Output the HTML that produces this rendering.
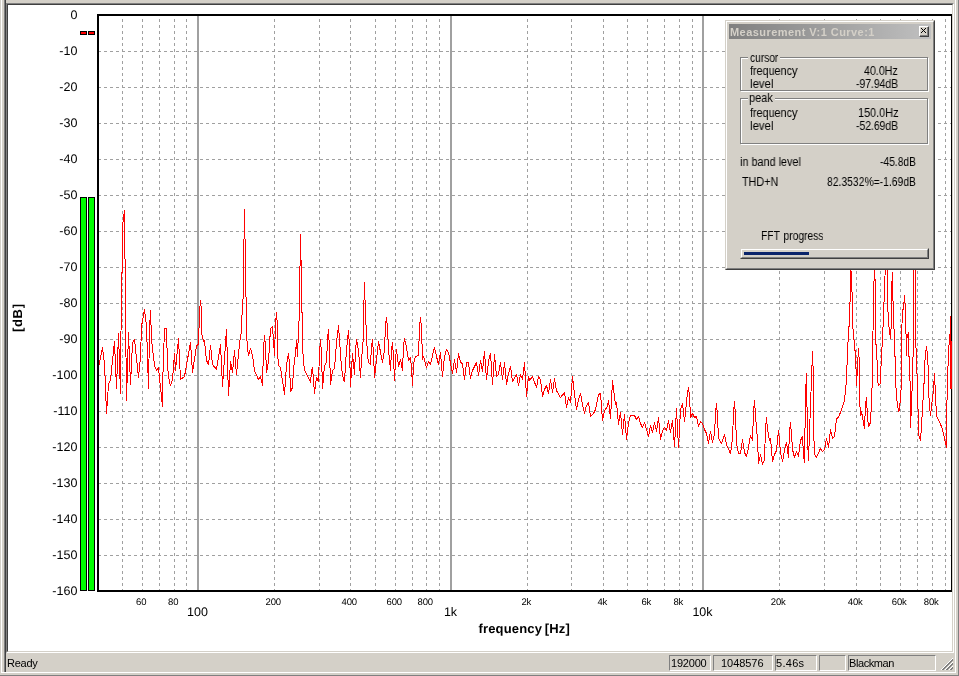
<!DOCTYPE html>
<html lang="en"><head><meta charset="utf-8"><title>Measurement</title>
<style>
html,body{margin:0;padding:0}
body{width:959px;height:676px;background:#d4d0c8;position:relative;overflow:hidden;font-family:"Liberation Sans",Arial,sans-serif;font-size:11px;color:#000}
.abs{position:absolute}
.ln{position:absolute}
#view{position:absolute;left:6px;top:3px;width:946px;height:648px;border-style:solid;border-width:1px;border-color:#808080 #fff #fff #808080}
#view>div{position:absolute;left:0;top:0;width:944px;height:646px;border-style:solid;border-width:1px;border-color:#404040 #d4d0c8 #d4d0c8 #404040;background:#fff}
.pane{position:absolute;top:655px;height:14px;border-style:solid;border-width:1px;border-color:#808080 #fff #fff #808080;line-height:14px;white-space:nowrap;font-size:11px}
.pane span{position:absolute;top:0;left:2px}
#ready{position:absolute;left:7px;top:656px;line-height:14px;font-size:11px;letter-spacing:-.25px}
#dlg{position:absolute;left:725px;top:20px;width:208px;height:248px;border-style:solid;border-width:1px;border-color:#d4d0c8 #404040 #404040 #d4d0c8;background:#d4d0c8}
#dlg>.in{position:absolute;left:0;top:0;width:206px;height:246px;border-style:solid;border-width:1px;border-color:#fff #808080 #808080 #fff}
#title{position:absolute;left:729px;top:24px;width:202px;height:15px;background:linear-gradient(to right,#808080,#c0c0c0);color:#d4d0c8;font-weight:bold;font-size:11px;line-height:15px;white-space:nowrap}
#title span{position:absolute;left:1px;top:1px;letter-spacing:.45px}
#close{position:absolute;left:919px;top:26px;width:8px;height:9px;background:#d4d0c8;border-style:solid;border-width:1px;border-color:#fff #404040 #404040 #fff}
#close i{position:absolute;left:0;top:0;width:7px;height:8px;border-style:solid;border-width:0 1px 1px 0;border-color:#808080}
.grp{position:absolute;border:1px solid #808080;box-shadow:1px 1px 0 #fff, inset 1px 1px 0 #fff}
.t{position:absolute;white-space:nowrap;font-size:12px;line-height:14px;transform-origin:0 0}
.t,.pane span,#ready,#title span{will-change:transform}
#prog{position:absolute;left:740px;top:248px;width:187px;height:9px;border-style:solid;border-width:1px;border-color:#d4d0c8 #404040 #404040 #d4d0c8}
#prog>div{position:absolute;left:0;top:0;width:185px;height:7px;border-style:solid;border-width:1px;border-color:#fff #808080 #808080 #fff}
#bar{position:absolute;left:744px;top:252px;width:65px;height:3px;background:#0a246a}
</style></head>
<body>
<div class="ln" style="left:1px;top:0;width:1px;height:673px;background:#fff"></div>
<div class="ln" style="left:4px;top:0;width:1px;height:672px;background:#808080"></div>
<div class="ln" style="left:5px;top:0;width:1px;height:672px;background:#404040"></div>
<div class="ln" style="left:955px;top:0;width:1px;height:673px;background:#fff"></div>
<div class="ln" style="left:958px;top:0;width:1px;height:676px;background:#808080"></div>
<div class="ln" style="left:1px;top:672px;width:955px;height:1px;background:#fff"></div>
<div class="ln" style="left:0;top:675px;width:959px;height:1px;background:#808080"></div>
<div id="view"><div></div></div>
<svg class="abs" id="plot" style="left:0;top:0;will-change:transform" width="959" height="676" viewBox="0 0 959 676" shape-rendering="crispEdges">
<path d="M122.5 16V590M142.5 16V590M159.5 16V590M174.5 16V590M186.5 16V590M274.5 16V590M319.5 16V590M350.5 16V590M375.5 16V590M395.5 16V590M412.5 16V590M426.5 16V590M439.5 16V590M527.5 16V590M571.5 16V590M603.5 16V590M627.5 16V590M647.5 16V590M664.5 16V590M679.5 16V590M692.5 16V590M779.5 16V590M824.5 16V590M856.5 16V590M880.5 16V590M900.5 16V590M917.5 16V590M932.5 16V590M945.5 16V590" fill="none" stroke="#a0a0a0" stroke-width="1" stroke-dasharray="3 3" stroke-dashoffset="3"/>
<path d="M99 51.5H951M99 87.5H951M99 123.5H951M99 159.5H951M99 195.5H951M99 231.5H951M99 267.5H951M99 303.5H951M99 339.5H951M99 375.5H951M99 411.5H951M99 447.5H951M99 483.5H951M99 519.5H951M99 555.5H951" fill="none" stroke="#a0a0a0" stroke-width="1" stroke-dasharray="3 3" stroke-dashoffset="1"/>
<rect x="197" y="16" width="2" height="574" fill="#a0a0a0"/>
<rect x="450" y="16" width="2" height="574" fill="#a0a0a0"/>
<rect x="702" y="16" width="2" height="574" fill="#a0a0a0"/>
<path fill="none" stroke="#ff0000" stroke-width="1" stroke-linecap="square" d="M98.5 367.5L102.5 347.5M102.5 347.5L104.5 363.5M104.5 363.5L106.5 413.5M106.5 413.5L108.5 384.5M108.5 384.5L110.5 379.5M110.5 379.5L114.5 341.5M114.5 341.5L116.5 388.5M116.5 388.5L118.5 333.5M118.5 333.5L120.5 393.5M120.5 393.5L121.5 272.5M121.5 272.5H122.5M122.5 272.5V226.5M122.5 226.5L123.5 217.5M123.5 217.5L124.5 210.5M124.5 210.5V258.5M124.5 258.5L125.5 259.5M125.5 259.5V312.5M125.5 312.5L126.5 400.5M126.5 400.5L128.5 332.5M128.5 332.5L130.5 384.5M130.5 384.5L132.5 342.5M132.5 342.5L134.5 339.5M134.5 339.5L138.5 377.5M138.5 377.5L140.5 357.5M140.5 357.5L141.5 326.5M141.5 326.5L144.5 309.5M144.5 309.5L146.5 326.5M146.5 326.5L148.5 388.5M148.5 388.5L149.5 330.5M149.5 330.5L150.5 310.5M150.5 310.5L151.5 339.5M151.5 339.5L154.5 365.5M154.5 365.5L156.5 370.5M156.5 370.5L158.5 367.5M158.5 367.5L160.5 387.5M160.5 387.5L162.5 406.5M162.5 406.5V387.5M162.5 387.5L164.5 328.5M164.5 328.5H166.5M166.5 328.5L167.5 366.5M167.5 366.5L169.5 382.5M169.5 382.5L170.5 385.5M170.5 385.5L172.5 379.5M172.5 379.5L174.5 353.5M174.5 353.5L175.5 370.5M175.5 370.5L178.5 338.5M178.5 338.5L180.5 379.5M180.5 379.5L184.5 376.5M184.5 376.5L190.5 342.5M190.5 342.5L192.5 372.5M192.5 372.5L196.5 345.5M196.5 345.5L198.5 344.5M198.5 344.5L199.5 312.5M199.5 312.5L200.5 300.5M200.5 300.5L201.5 311.5M201.5 311.5V332.5M201.5 332.5L203.5 341.5M203.5 341.5L204.5 340.5M204.5 340.5L206.5 360.5M206.5 360.5L208.5 364.5M208.5 364.5L210.5 345.5M210.5 345.5L212.5 364.5M212.5 364.5L216.5 369.5M216.5 369.5L220.5 344.5M220.5 344.5L222.5 386.5M222.5 386.5L226.5 329.5M226.5 329.5L228.5 395.5M228.5 395.5L230.5 361.5M230.5 361.5L232.5 372.5M232.5 372.5L234.5 350.5M234.5 350.5L236.5 374.5M236.5 374.5L237.5 364.5M237.5 364.5L239.5 343.5M239.5 343.5L241.5 331.5M241.5 331.5L242.5 299.5M242.5 299.5L243.5 298.5M243.5 298.5V239.5M243.5 239.5L244.5 238.5M244.5 238.5V209.5M244.5 209.5V238.5M244.5 238.5L245.5 239.5M245.5 239.5V296.5M245.5 296.5L246.5 297.5M246.5 297.5V333.5M246.5 333.5L247.5 348.5M247.5 348.5L248.5 355.5M248.5 355.5L250.5 348.5M250.5 348.5L252.5 355.5M252.5 355.5L254.5 370.5M254.5 370.5L258.5 379.5M258.5 379.5L260.5 376.5M260.5 376.5L262.5 385.5M262.5 385.5L263.5 348.5M263.5 348.5L264.5 335.5M264.5 335.5L265.5 346.5M265.5 346.5L266.5 372.5M266.5 372.5L268.5 361.5M268.5 361.5L270.5 328.5M270.5 328.5L272.5 326.5M272.5 326.5L274.5 355.5M274.5 355.5L275.5 324.5M275.5 324.5L276.5 312.5M276.5 312.5L277.5 327.5M277.5 327.5V352.5M277.5 352.5L278.5 365.5M278.5 365.5L280.5 367.5M280.5 367.5L284.5 394.5M284.5 394.5L286.5 364.5M286.5 364.5L288.5 353.5M288.5 353.5L289.5 364.5M289.5 364.5L290.5 391.5M290.5 391.5L292.5 387.5M292.5 387.5L293.5 368.5M293.5 368.5L295.5 353.5M295.5 353.5L296.5 340.5M296.5 340.5L297.5 356.5M297.5 356.5L298.5 330.5M298.5 330.5L299.5 312.5M299.5 312.5V266.5M299.5 266.5L300.5 265.5M300.5 265.5V234.5M300.5 234.5V260.5M300.5 260.5H301.5M301.5 260.5V312.5M301.5 312.5H302.5M302.5 312.5V345.5M302.5 345.5L303.5 361.5M303.5 361.5L304.5 370.5M304.5 370.5L307.5 375.5M307.5 375.5L310.5 382.5M310.5 382.5L311.5 371.5M311.5 371.5L312.5 367.5M312.5 367.5L314.5 393.5M314.5 393.5L316.5 377.5M316.5 377.5L318.5 381.5M318.5 381.5L319.5 352.5M319.5 352.5L320.5 339.5M320.5 339.5L321.5 353.5M321.5 353.5L322.5 388.5M322.5 388.5L324.5 365.5M324.5 365.5L326.5 362.5M326.5 362.5L327.5 339.5M327.5 339.5L328.5 329.5M328.5 329.5L329.5 349.5M329.5 349.5L330.5 384.5M330.5 384.5L332.5 370.5M332.5 370.5L334.5 368.5M334.5 368.5L336.5 342.5M336.5 342.5L338.5 325.5M338.5 325.5L339.5 339.5M339.5 339.5L341.5 368.5M341.5 368.5L343.5 379.5M343.5 379.5L344.5 381.5M344.5 381.5L346.5 349.5M346.5 349.5L348.5 330.5M348.5 330.5L349.5 347.5M349.5 347.5L350.5 386.5M350.5 386.5L352.5 353.5M352.5 353.5L354.5 374.5M354.5 374.5L355.5 350.5M355.5 350.5L356.5 339.5M356.5 339.5L358.5 350.5M358.5 350.5L360.5 377.5M360.5 377.5L361.5 359.5M361.5 359.5L363.5 336.5M363.5 336.5V300.5M363.5 300.5L364.5 299.5M364.5 299.5V282.5M364.5 282.5V299.5M364.5 299.5L365.5 300.5M365.5 300.5V312.5M365.5 312.5L366.5 336.5M366.5 336.5L367.5 355.5M367.5 355.5L368.5 362.5M368.5 362.5L370.5 364.5M370.5 364.5L371.5 346.5M371.5 346.5L372.5 339.5M372.5 339.5L373.5 353.5M373.5 353.5L374.5 377.5M374.5 377.5L376.5 359.5M376.5 359.5L378.5 341.5M378.5 341.5L382.5 362.5M382.5 362.5L384.5 349.5M384.5 349.5L385.5 325.5M385.5 325.5L386.5 317.5M386.5 317.5L387.5 327.5M387.5 327.5L388.5 349.5M388.5 349.5L390.5 370.5M390.5 370.5L391.5 350.5M391.5 350.5L392.5 342.5M392.5 342.5L393.5 356.5M393.5 356.5L394.5 380.5M394.5 380.5L395.5 359.5M395.5 359.5L396.5 349.5M396.5 349.5L398.5 366.5M398.5 366.5L400.5 359.5M400.5 359.5L402.5 370.5M402.5 370.5L403.5 346.5M403.5 346.5L404.5 338.5M404.5 338.5L406.5 347.5M406.5 347.5L408.5 360.5M408.5 360.5L410.5 357.5M410.5 357.5L411.5 367.5M411.5 367.5L412.5 385.5M412.5 385.5L413.5 364.5M413.5 364.5L415.5 356.5M415.5 356.5L418.5 355.5M418.5 355.5L419.5 327.5M419.5 327.5L420.5 317.5M420.5 317.5L421.5 328.5M421.5 328.5L422.5 359.5M422.5 359.5L423.5 356.5M423.5 356.5L426.5 367.5M426.5 367.5L428.5 361.5M428.5 361.5L430.5 364.5M430.5 364.5L432.5 355.5M432.5 355.5L434.5 347.5M434.5 347.5L436.5 356.5M436.5 356.5L438.5 364.5M438.5 364.5L440.5 352.5M440.5 352.5L442.5 376.5M442.5 376.5L444.5 356.5M444.5 356.5L446.5 349.5M446.5 349.5L448.5 352.5M448.5 352.5L452.5 373.5M452.5 373.5L454.5 359.5M454.5 359.5L456.5 372.5M456.5 372.5L458.5 353.5M458.5 353.5L460.5 362.5M460.5 362.5L462.5 363.5M462.5 363.5L464.5 379.5M464.5 379.5L466.5 362.5M466.5 362.5H468.5M468.5 362.5L470.5 378.5M470.5 378.5L472.5 370.5M472.5 370.5L476.5 362.5M476.5 362.5L478.5 375.5M478.5 375.5L480.5 360.5M480.5 360.5L482.5 371.5M482.5 371.5L484.5 351.5M484.5 351.5L486.5 379.5M486.5 379.5L488.5 361.5M488.5 361.5L490.5 353.5M490.5 353.5L492.5 384.5M492.5 384.5L494.5 354.5M494.5 354.5L496.5 376.5M496.5 376.5L498.5 374.5M498.5 374.5L500.5 362.5M500.5 362.5L502.5 379.5M502.5 379.5L504.5 362.5M504.5 362.5L506.5 384.5M506.5 384.5L508.5 373.5M508.5 373.5L510.5 366.5M510.5 366.5L512.5 381.5M512.5 381.5L516.5 374.5M516.5 374.5L518.5 385.5M518.5 385.5L520.5 374.5M520.5 374.5L522.5 379.5M522.5 379.5L524.5 362.5M524.5 362.5L526.5 396.5M526.5 396.5L528.5 376.5M528.5 376.5L529.5 380.5M529.5 380.5L532.5 376.5M532.5 376.5L536.5 387.5M536.5 387.5L538.5 376.5M538.5 376.5L540.5 379.5M540.5 379.5L542.5 396.5M542.5 396.5L544.5 389.5M544.5 389.5L546.5 385.5M546.5 385.5L548.5 393.5M548.5 393.5L550.5 379.5M550.5 379.5L552.5 392.5M552.5 392.5L554.5 378.5M554.5 378.5L556.5 390.5M556.5 390.5L560.5 397.5M560.5 397.5L564.5 392.5M564.5 392.5L566.5 407.5M566.5 407.5L568.5 397.5M568.5 397.5L570.5 402.5M570.5 402.5L572.5 376.5M572.5 376.5L573.5 385.5M573.5 385.5L576.5 409.5M576.5 409.5L578.5 399.5M578.5 399.5L580.5 393.5M580.5 393.5L582.5 404.5M582.5 404.5L584.5 413.5M584.5 413.5L586.5 405.5M586.5 405.5L588.5 402.5M588.5 402.5L590.5 416.5M590.5 416.5L593.5 413.5M593.5 413.5L595.5 409.5M595.5 409.5L598.5 394.5M598.5 394.5L600.5 393.5M600.5 393.5L602.5 420.5M602.5 420.5L604.5 410.5M604.5 410.5L607.5 406.5M607.5 406.5L608.5 400.5M608.5 400.5L610.5 418.5M610.5 418.5L612.5 380.5M612.5 380.5L613.5 389.5M613.5 389.5L615.5 404.5M615.5 404.5L616.5 402.5M616.5 402.5L618.5 424.5M618.5 424.5L620.5 412.5M620.5 412.5L622.5 434.5M622.5 434.5L624.5 414.5M624.5 414.5L626.5 439.5M626.5 439.5L628.5 422.5M628.5 422.5L630.5 415.5M630.5 415.5H634.5M634.5 415.5L636.5 419.5M636.5 419.5L638.5 416.5M638.5 416.5L640.5 423.5M640.5 423.5L642.5 427.5M642.5 427.5L644.5 422.5M644.5 422.5L648.5 436.5M648.5 436.5L650.5 425.5M650.5 425.5L652.5 432.5M652.5 432.5L654.5 422.5M654.5 422.5L656.5 431.5M656.5 431.5L658.5 417.5M658.5 417.5L660.5 439.5M660.5 439.5L662.5 430.5M662.5 430.5L664.5 427.5M664.5 427.5L666.5 430.5M666.5 430.5L668.5 420.5M668.5 420.5L670.5 432.5M670.5 432.5L672.5 420.5M672.5 420.5L674.5 446.5M674.5 446.5L676.5 408.5M676.5 408.5L678.5 447.5M678.5 447.5L680.5 409.5M680.5 409.5L682.5 403.5M682.5 403.5L684.5 421.5M684.5 421.5L686.5 402.5M686.5 402.5L687.5 392.5M687.5 392.5L688.5 387.5M688.5 387.5L689.5 395.5M689.5 395.5L690.5 417.5M690.5 417.5L692.5 413.5M692.5 413.5L694.5 417.5M694.5 417.5L696.5 416.5M696.5 416.5L698.5 426.5M698.5 426.5L700.5 421.5M700.5 421.5L702.5 423.5M702.5 423.5L704.5 429.5M704.5 429.5L706.5 433.5M706.5 433.5L708.5 443.5M708.5 443.5L710.5 431.5M710.5 431.5L712.5 442.5M712.5 442.5L714.5 434.5M714.5 434.5L715.5 413.5M715.5 413.5L716.5 403.5M716.5 403.5L717.5 416.5M717.5 416.5L718.5 438.5M718.5 438.5L721.5 443.5M721.5 443.5L724.5 434.5M724.5 434.5L726.5 444.5M726.5 444.5L730.5 453.5M730.5 453.5L732.5 438.5M732.5 438.5L733.5 413.5M733.5 413.5L734.5 401.5M734.5 401.5L735.5 415.5M735.5 415.5L736.5 443.5M736.5 443.5L738.5 453.5M738.5 453.5H740.5M740.5 453.5L742.5 439.5M742.5 439.5L744.5 452.5M744.5 452.5L746.5 456.5M746.5 456.5L748.5 447.5M748.5 447.5L750.5 435.5M750.5 435.5L752.5 440.5M752.5 440.5L753.5 412.5M753.5 412.5L754.5 400.5M754.5 400.5L755.5 415.5M755.5 415.5L757.5 440.5M757.5 440.5L758.5 463.5M758.5 463.5L760.5 454.5M760.5 454.5L762.5 464.5M762.5 464.5L764.5 459.5M764.5 459.5L765.5 428.5M765.5 428.5L766.5 417.5M766.5 417.5L767.5 429.5M767.5 429.5L769.5 440.5M769.5 440.5L770.5 438.5M770.5 438.5L772.5 461.5M772.5 461.5L774.5 454.5M774.5 454.5L776.5 450.5M776.5 450.5L778.5 430.5M778.5 430.5L780.5 452.5M780.5 452.5L782.5 461.5M782.5 461.5L784.5 450.5M784.5 450.5L786.5 442.5M786.5 442.5L788.5 457.5M788.5 457.5L789.5 431.5M789.5 431.5L790.5 422.5M790.5 422.5L791.5 434.5M791.5 434.5L792.5 449.5M792.5 449.5L794.5 457.5M794.5 457.5L796.5 451.5M796.5 451.5L798.5 456.5M798.5 456.5L800.5 440.5M800.5 440.5L802.5 436.5M802.5 436.5L803.5 455.5M803.5 455.5L804.5 462.5M804.5 462.5L805.5 395.5M805.5 395.5L806.5 373.5M806.5 373.5L807.5 438.5M807.5 438.5L808.5 460.5M808.5 460.5L809.5 432.5M809.5 432.5L810.5 405.5M810.5 405.5L812.5 351.5M812.5 351.5L813.5 379.5M813.5 379.5V427.5M813.5 427.5L814.5 454.5M814.5 454.5L816.5 457.5M816.5 457.5L820.5 448.5M820.5 448.5L822.5 451.5M822.5 451.5L824.5 449.5M824.5 449.5L826.5 438.5M826.5 438.5L828.5 447.5M828.5 447.5L830.5 429.5M830.5 429.5L832.5 438.5M832.5 438.5L834.5 436.5M834.5 436.5L836.5 418.5M836.5 418.5L838.5 417.5M838.5 417.5L841.5 409.5M841.5 409.5L844.5 400.5M844.5 400.5L846.5 380.5M846.5 380.5V372.5M846.5 372.5L847.5 357.5M847.5 357.5L848.5 327.5M848.5 327.5L849.5 325.5M849.5 325.5L850.5 279.5M850.5 279.5V262.5M850.5 262.5L851.5 279.5M851.5 279.5L852.5 303.5M852.5 303.5V328.5M852.5 328.5L853.5 329.5M853.5 329.5L854.5 349.5M854.5 349.5L855.5 351.5M855.5 351.5L856.5 385.5M856.5 385.5L858.5 348.5M858.5 348.5L859.5 365.5M859.5 365.5V398.5M859.5 398.5L860.5 415.5M860.5 415.5L861.5 411.5M861.5 411.5L864.5 428.5M864.5 428.5L865.5 404.5M865.5 404.5L866.5 397.5M866.5 397.5L867.5 417.5M867.5 417.5L868.5 426.5M868.5 426.5L870.5 422.5M870.5 422.5L871.5 401.5M871.5 401.5L872.5 375.5M872.5 375.5V362.5M872.5 362.5L873.5 300.5M873.5 300.5L874.5 262.5M874.5 262.5L875.5 294.5M875.5 294.5V343.5M875.5 343.5L876.5 345.5M876.5 345.5L877.5 373.5M877.5 373.5V380.5M877.5 380.5L878.5 385.5M878.5 385.5L880.5 383.5M880.5 383.5V375.5M880.5 375.5L881.5 356.5M881.5 356.5L882.5 338.5M882.5 338.5L883.5 315.5M883.5 315.5L884.5 289.5M884.5 289.5L885.5 262.5M885.5 262.5H887.5M887.5 262.5V299.5M887.5 299.5L888.5 323.5M888.5 323.5L890.5 338.5M890.5 338.5L891.5 320.5M891.5 320.5V289.5M891.5 289.5L892.5 272.5M892.5 272.5V300.5M892.5 300.5L893.5 301.5M893.5 301.5L894.5 355.5M894.5 355.5L895.5 357.5M895.5 357.5V378.5M895.5 378.5L896.5 397.5M896.5 397.5L898.5 411.5M898.5 411.5L899.5 409.5M899.5 409.5L901.5 383.5M901.5 383.5V375.5M901.5 375.5V338.5M901.5 338.5L902.5 309.5M902.5 309.5H903.5M903.5 309.5L904.5 295.5M904.5 295.5L905.5 309.5M905.5 309.5V310.5M905.5 310.5L906.5 355.5M906.5 355.5V340.5M906.5 340.5L908.5 332.5M908.5 332.5V355.5M908.5 355.5L909.5 357.5M909.5 357.5L910.5 403.5M910.5 403.5V427.5M910.5 427.5L911.5 404.5M911.5 404.5L912.5 378.5M912.5 378.5V357.5M912.5 357.5L913.5 356.5M913.5 356.5V278.5M913.5 278.5L914.5 262.5M914.5 262.5L915.5 275.5M915.5 275.5V347.5M915.5 347.5L916.5 348.5M916.5 348.5L917.5 397.5M917.5 397.5L918.5 420.5M918.5 420.5V434.5M918.5 434.5L920.5 440.5M920.5 440.5L921.5 426.5M921.5 426.5L922.5 408.5M922.5 408.5L924.5 375.5M924.5 375.5V366.5M924.5 366.5L925.5 353.5M925.5 353.5L926.5 346.5M926.5 346.5L927.5 355.5M927.5 355.5L928.5 373.5M928.5 373.5V389.5M928.5 389.5L929.5 406.5M929.5 406.5L930.5 415.5M930.5 415.5L931.5 406.5M931.5 406.5L933.5 389.5M933.5 389.5L934.5 373.5M934.5 373.5L936.5 416.5M936.5 416.5L939.5 421.5M939.5 421.5L942.5 429.5M942.5 429.5L946.5 447.5M946.5 447.5V418.5M946.5 418.5L947.5 382.5M947.5 382.5L948.5 350.5M948.5 350.5L950.5 328.5M950.5 328.5V316.5M950.5 316.5V388.5"/>
<path d="M98 592V15H952V592" fill="none" stroke="#000" stroke-width="2" visibility="hidden"/>
<rect x="97" y="14" width="2" height="578" fill="#000"/>
<rect x="97" y="14" width="855" height="2" fill="#000"/>
<rect x="97" y="590" width="855" height="2" fill="#000"/>
<rect x="951" y="14" width="1" height="578" fill="#000"/>
<rect x="951" y="341" width="1" height="48" fill="#ff0000"/>
<rect x="80" y="197" width="7" height="394" fill="#000"/>
<rect x="81" y="198" width="5" height="392" fill="#00ff00"/>
<rect x="80" y="31" width="7" height="4" fill="#000"/>
<rect x="81" y="32" width="5" height="2" fill="#ff0000"/>
<rect x="88" y="197" width="7" height="394" fill="#000"/>
<rect x="89" y="198" width="5" height="392" fill="#00ff00"/>
<rect x="88" y="31" width="7" height="4" fill="#000"/>
<rect x="89" y="32" width="5" height="2" fill="#ff0000"/>
<g font-family="Liberation Sans, Arial, sans-serif" fill="#000" shape-rendering="auto" text-rendering="geometricPrecision">
<text x="77.4" y="19.4" font-size="12.5" text-anchor="end">0</text>
<text x="77.4" y="55.4" font-size="12.5" text-anchor="end">-10</text>
<text x="77.4" y="91.4" font-size="12.5" text-anchor="end">-20</text>
<text x="77.4" y="127.4" font-size="12.5" text-anchor="end">-30</text>
<text x="77.4" y="163.4" font-size="12.5" text-anchor="end">-40</text>
<text x="77.4" y="199.4" font-size="12.5" text-anchor="end">-50</text>
<text x="77.4" y="235.4" font-size="12.5" text-anchor="end">-60</text>
<text x="77.4" y="271.4" font-size="12.5" text-anchor="end">-70</text>
<text x="77.4" y="307.4" font-size="12.5" text-anchor="end">-80</text>
<text x="77.4" y="343.4" font-size="12.5" text-anchor="end">-90</text>
<text x="77.4" y="379.4" font-size="12.5" text-anchor="end">-100</text>
<text x="77.4" y="415.4" font-size="12.5" text-anchor="end">-110</text>
<text x="77.4" y="451.4" font-size="12.5" text-anchor="end">-120</text>
<text x="77.4" y="487.4" font-size="12.5" text-anchor="end">-130</text>
<text x="77.4" y="523.4" font-size="12.5" text-anchor="end">-140</text>
<text x="77.4" y="559.4" font-size="12.5" text-anchor="end">-150</text>
<text x="77.4" y="595.4" font-size="12.5" text-anchor="end">-160</text>
<text x="141.2" y="605" font-size="9.5" letter-spacing="-.2" text-anchor="middle">60</text>
<text x="173.2" y="605" font-size="9.5" letter-spacing="-.2" text-anchor="middle">80</text>
<text x="273.2" y="605" font-size="9.5" letter-spacing="-.2" text-anchor="middle">200</text>
<text x="349.2" y="605" font-size="9.5" letter-spacing="-.2" text-anchor="middle">400</text>
<text x="394.2" y="605" font-size="9.5" letter-spacing="-.2" text-anchor="middle">600</text>
<text x="425.2" y="605" font-size="9.5" letter-spacing="-.2" text-anchor="middle">800</text>
<text x="526.2" y="605" font-size="9.5" letter-spacing="-.2" text-anchor="middle">2k</text>
<text x="602.2" y="605" font-size="9.5" letter-spacing="-.2" text-anchor="middle">4k</text>
<text x="646.2" y="605" font-size="9.5" letter-spacing="-.2" text-anchor="middle">6k</text>
<text x="678.2" y="605" font-size="9.5" letter-spacing="-.2" text-anchor="middle">8k</text>
<text x="778.2" y="605" font-size="9.5" letter-spacing="-.2" text-anchor="middle">20k</text>
<text x="855.2" y="605" font-size="9.5" letter-spacing="-.2" text-anchor="middle">40k</text>
<text x="899.2" y="605" font-size="9.5" letter-spacing="-.2" text-anchor="middle">60k</text>
<text x="931.2" y="605" font-size="9.5" letter-spacing="-.2" text-anchor="middle">80k</text>
<text x="197.5" y="616" font-size="12.5" text-anchor="middle">100</text>
<text x="450.5" y="616" font-size="12.5" text-anchor="middle">1k</text>
<text x="702.5" y="616" font-size="12.5" text-anchor="middle">10k</text>
<text x="524.2" y="633" font-size="13" font-weight="bold" text-anchor="middle" letter-spacing=".17" word-spacing="-1.2">frequency [Hz]</text>
<text transform="translate(22,317.7) rotate(-90)" font-size="13" font-weight="bold" letter-spacing=".7" text-anchor="middle">[dB]</text>
</g>
</svg>
<div id="dlg"><div class="in"></div></div>
<div id="title"><span>Measurement V:1 Curve:1</span></div>
<div id="close"><i></i><svg class="abs" style="left:1px;top:1px" width="5" height="5" viewBox="0 0 5 5" shape-rendering="crispEdges"><path d="M0 0h1v1h-1zM4 0h1v1h-1zM1 1h1v1h-1zM3 1h1v1h-1zM2 2h1v1h-1zM1 3h1v1h-1zM3 3h1v1h-1zM0 4h1v1h-1zM4 4h1v1h-1z" fill="#000"/></svg></div>
<div class="grp" style="left:740px;top:57px;width:186px;height:32px"></div>
<div class="grp" style="left:740px;top:98px;width:186px;height:44px"></div>
<div class="ln" style="left:748px;top:57px;width:32px;height:2px;background:#d4d0c8"></div>
<div class="ln" style="left:748px;top:98px;width:27px;height:2px;background:#d4d0c8"></div>
<div class="t" style="left:749.58px;top:51.4px;transform:scaleX(0.8489);">cursor</div>
<div class="t" style="left:750.30px;top:64.4px;transform:scaleX(0.8976);">frequency</div>
<div class="t" style="left:749.92px;top:77.4px;transform:scaleX(0.9522);">level</div>
<div class="t" style="left:864.46px;top:64.4px;transform:scaleX(0.8886);">40.0Hz</div>
<div class="t" style="left:855.57px;top:77.4px;transform:scaleX(0.8632);">-97.94dB</div>
<div class="t" style="left:748.89px;top:91.4px;transform:scaleX(0.9149);">peak</div>
<div class="t" style="left:750.30px;top:106.4px;transform:scaleX(0.8976);">frequency</div>
<div class="t" style="left:749.92px;top:119.4px;transform:scaleX(0.9522);">level</div>
<div class="t" style="left:858.09px;top:106.4px;transform:scaleX(0.9070);">150.0Hz</div>
<div class="t" style="left:855.57px;top:119.4px;transform:scaleX(0.8632);">-52.69dB</div>
<div class="t" style="left:740.32px;top:155.4px;transform:scaleX(0.9034);">in band level</div>
<div class="t" style="left:880.26px;top:155.4px;transform:scaleX(0.8564);">-45.8dB</div>
<div class="t" style="left:742.30px;top:175.4px;transform:scaleX(0.8974);">THD+N</div>
<div class="t" style="left:827.15px;top:175.4px;transform:scaleX(0.8627);">82.3532%=-1.69dB</div>
<div class="t" style="left:760.83px;top:229.4px;transform:scaleX(0.8559);word-spacing:1.2px;">FFT progress</div>
<div id="prog"><div></div></div><div id="bar"></div>
<div id="ready">Ready</div>
<div class="pane" style="left:669px;width:40px"><span style="left:0.6px;letter-spacing:-0.2px">192000</span></div>
<div class="pane" style="left:713px;width:58px"><span style="left:6.6px;letter-spacing:-0.05px">1048576</span></div>
<div class="pane" style="left:775px;width:40px"><span style="left:0.2px;letter-spacing:0.3px">5.46s</span></div>
<div class="pane" style="left:819px;width:25px"><span style="left:0px;letter-spacing:0px"></span></div>
<div class="pane" style="left:848px;width:86px"><span style="left:-0.2px;letter-spacing:-0.42px">Blackman</span></div>
<svg class="abs" style="left:0;top:0" width="959" height="676" viewBox="0 0 959 676" shape-rendering="crispEdges" pointer-events="none"><path d="M952 658h1v1h-1zM951 659h1v1h-1zM950 660h1v1h-1zM949 661h1v1h-1zM948 662h1v1h-1zM952 662h1v1h-1zM947 663h1v1h-1zM951 663h1v1h-1zM946 664h1v1h-1zM950 664h1v1h-1zM945 665h1v1h-1zM949 665h1v1h-1zM944 666h1v1h-1zM948 666h1v1h-1zM952 666h1v1h-1zM943 667h1v1h-1zM947 667h1v1h-1zM951 667h1v1h-1zM942 668h1v1h-1zM946 668h1v1h-1zM950 668h1v1h-1zM941 669h1v1h-1zM945 669h1v1h-1zM949 669h1v1h-1z" fill="#fff"/><path d="M952 659h1v1h-1zM951 660h1v1h-1zM952 660h1v1h-1zM950 661h1v1h-1zM951 661h1v1h-1zM949 662h1v1h-1zM950 662h1v1h-1zM948 663h1v1h-1zM949 663h1v1h-1zM952 663h1v1h-1zM947 664h1v1h-1zM948 664h1v1h-1zM951 664h1v1h-1zM952 664h1v1h-1zM946 665h1v1h-1zM947 665h1v1h-1zM950 665h1v1h-1zM951 665h1v1h-1zM945 666h1v1h-1zM946 666h1v1h-1zM949 666h1v1h-1zM950 666h1v1h-1zM944 667h1v1h-1zM945 667h1v1h-1zM948 667h1v1h-1zM949 667h1v1h-1zM952 667h1v1h-1zM943 668h1v1h-1zM944 668h1v1h-1zM947 668h1v1h-1zM948 668h1v1h-1zM951 668h1v1h-1zM952 668h1v1h-1zM942 669h1v1h-1zM943 669h1v1h-1zM946 669h1v1h-1zM947 669h1v1h-1zM950 669h1v1h-1zM951 669h1v1h-1z" fill="#808080"/></svg>
</body></html>
